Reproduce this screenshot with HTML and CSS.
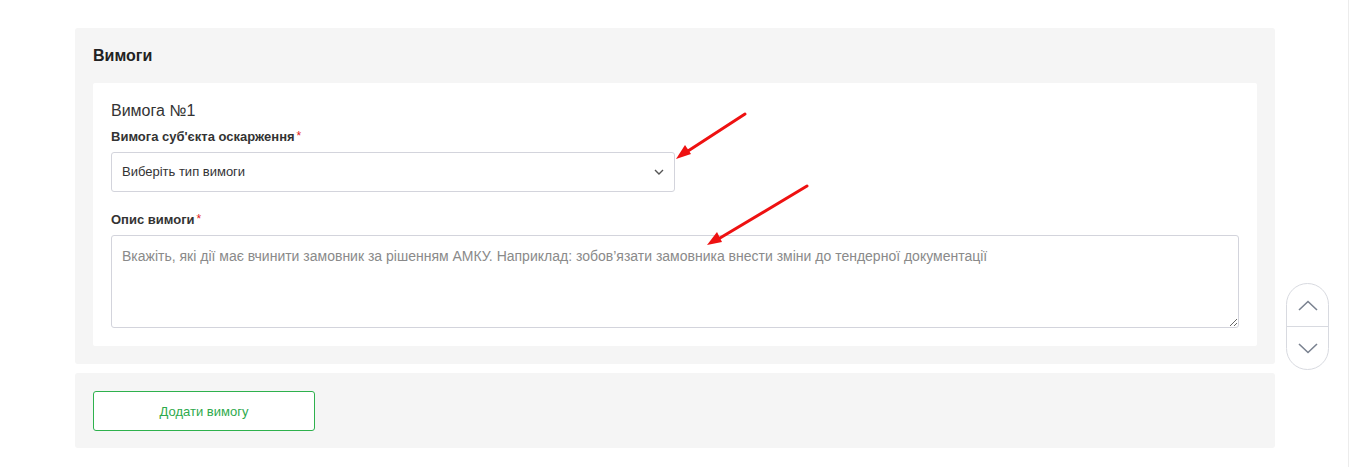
FILE: index.html
```html
<!DOCTYPE html>
<html lang="uk">
<head>
<meta charset="utf-8">
<link rel="stylesheet" href="styles.css">
</head>
<body>
<div class="page">
  <section class="panel">
    <h2 class="panel-title">Вимоги</h2>
    <div class="card">
      <div class="card-title">Вимога №1</div>
      <label class="field-label">Вимога суб'єкта оскарження<span class="req">*</span></label>
      <div class="select">
        <span>Виберіть тип вимоги</span>
        <svg class="chev" width="10" height="6" viewBox="0 0 10 6"><path d="M1 1 L5 5 L9 1" fill="none" stroke="#555" stroke-width="1.4"/></svg>
      </div>
      <label class="field-label second">Опис вимоги<span class="req">*</span></label>
      <textarea class="textarea" placeholder="Вкажіть, які дії має вчинити замовник за рішенням АМКУ. Наприклад: зобов’язати замовника внести зміни до тендерної документації"></textarea>
    </div>
  </section>
  <section class="panel panel-actions">
    <button class="btn-add">Додати вимогу</button>
  </section>
</div>

<div class="scroller">
  <div class="scroll-btn">
    <svg width="20" height="11" viewBox="0 0 20 11"><path d="M1 10 L10 1.5 L19 10" fill="none" stroke="#7a8290" stroke-width="1.6"/></svg>
  </div>
  <div class="scroll-btn">
    <svg width="20" height="11" viewBox="0 0 20 11"><path d="M1 1 L10 9.5 L19 1" fill="none" stroke="#7a8290" stroke-width="1.6"/></svg>
  </div>
</div>

<div class="edge"></div>

<svg class="annot" width="1350" height="467" viewBox="0 0 1350 467">
  <line x1="745" y1="114" x2="688" y2="151" stroke="#ee1111" stroke-width="3" stroke-linecap="round"/>
  <polygon points="676,159 685,145 691,154" fill="#ee1111"/>
  <line x1="807" y1="186" x2="720" y2="238" stroke="#ee1111" stroke-width="3" stroke-linecap="round"/>
  <polygon points="707,245 717,232 722,242" fill="#ee1111"/>
</svg>
</body>
</html>
```

FILE: styles.css
```css
* { box-sizing: border-box; }
html, body { margin: 0; padding: 0; background: #fff; }
body {
  font-family: "Liberation Sans", Arial, sans-serif;
  color: #333;
  width: 1350px;
  height: 467px;
  overflow: hidden;
  position: relative;
}
.page {
  width: 1200px;
  margin-left: 75px;
  padding-top: 28px;
  display: flex;
  flex-direction: column;
  gap: 9px;
}
.panel {
  background: #f5f5f5;
  border-radius: 3px;
  padding: 18px;
}
.panel-title {
  margin: 0 0 17px;
  font-size: 16px;
  line-height: 20px;
  font-weight: bold;
  color: #222;
}
.card {
  background: #fff;
  border-radius: 2px;
  padding: 18px;
  display: flex;
  flex-direction: column;
}
.card-title {
  font-size: 16px;
  line-height: 20px;
  color: #333;
  margin-bottom: 8px;
}
.field-label {
  font-size: 13px;
  line-height: 16px;
  font-weight: bold;
  color: #333;
  margin-bottom: 7px;
}
.field-label.second { margin-top: 20px; margin-bottom: 7px; }
.req { color: #e02020; font-weight: normal; margin-left: 2px; position: relative; top: -1px; font-size: 12px; }
.select {
  width: 564px;
  height: 40px;
  border: 1px solid #d3d4dc;
  border-radius: 3px;
  display: flex;
  align-items: center;
  justify-content: space-between;
  padding: 0 10px 1px 10px;
  font-size: 13px;
  color: #333;
}
.textarea {
  width: 1128px;
  height: 93px;
  border: 1px solid #d3d4dc;
  border-radius: 3px;
  padding: 12px 10px;
  font-family: "Liberation Sans", Arial, sans-serif;
  font-size: 14px;
  color: #333;
  resize: vertical;
  display: block;
  margin: 0;
}
.textarea::placeholder { color: #8a8a8a; opacity: 1; }
.panel-actions { height: 75px; }
.btn-add {
  width: 222px;
  height: 40px;
  background: #fff;
  border: 1px solid #2eb14d;
  border-radius: 3px;
  color: #2eaa4c;
  font-family: "Liberation Sans", Arial, sans-serif;
  font-size: 13px;
  padding: 0;
}
.scroller {
  position: absolute;
  left: 1286px;
  top: 283px;
  width: 43px;
  height: 87px;
  border: 1px solid #d8dae0;
  border-radius: 22px;
  background: #fff;
  display: flex;
  flex-direction: column;
}
.scroll-btn {
  flex: 1;
  display: flex;
  align-items: center;
  justify-content: center;
}
.scroll-btn + .scroll-btn { border-top: 1px solid #d8dae0; }
.edge {
  position: absolute;
  right: 1px;
  top: 0;
  width: 1px;
  height: 467px;
  background: #ececec;
}
.annot {
  position: absolute;
  left: 0;
  top: 0;
  pointer-events: none;
}
```
